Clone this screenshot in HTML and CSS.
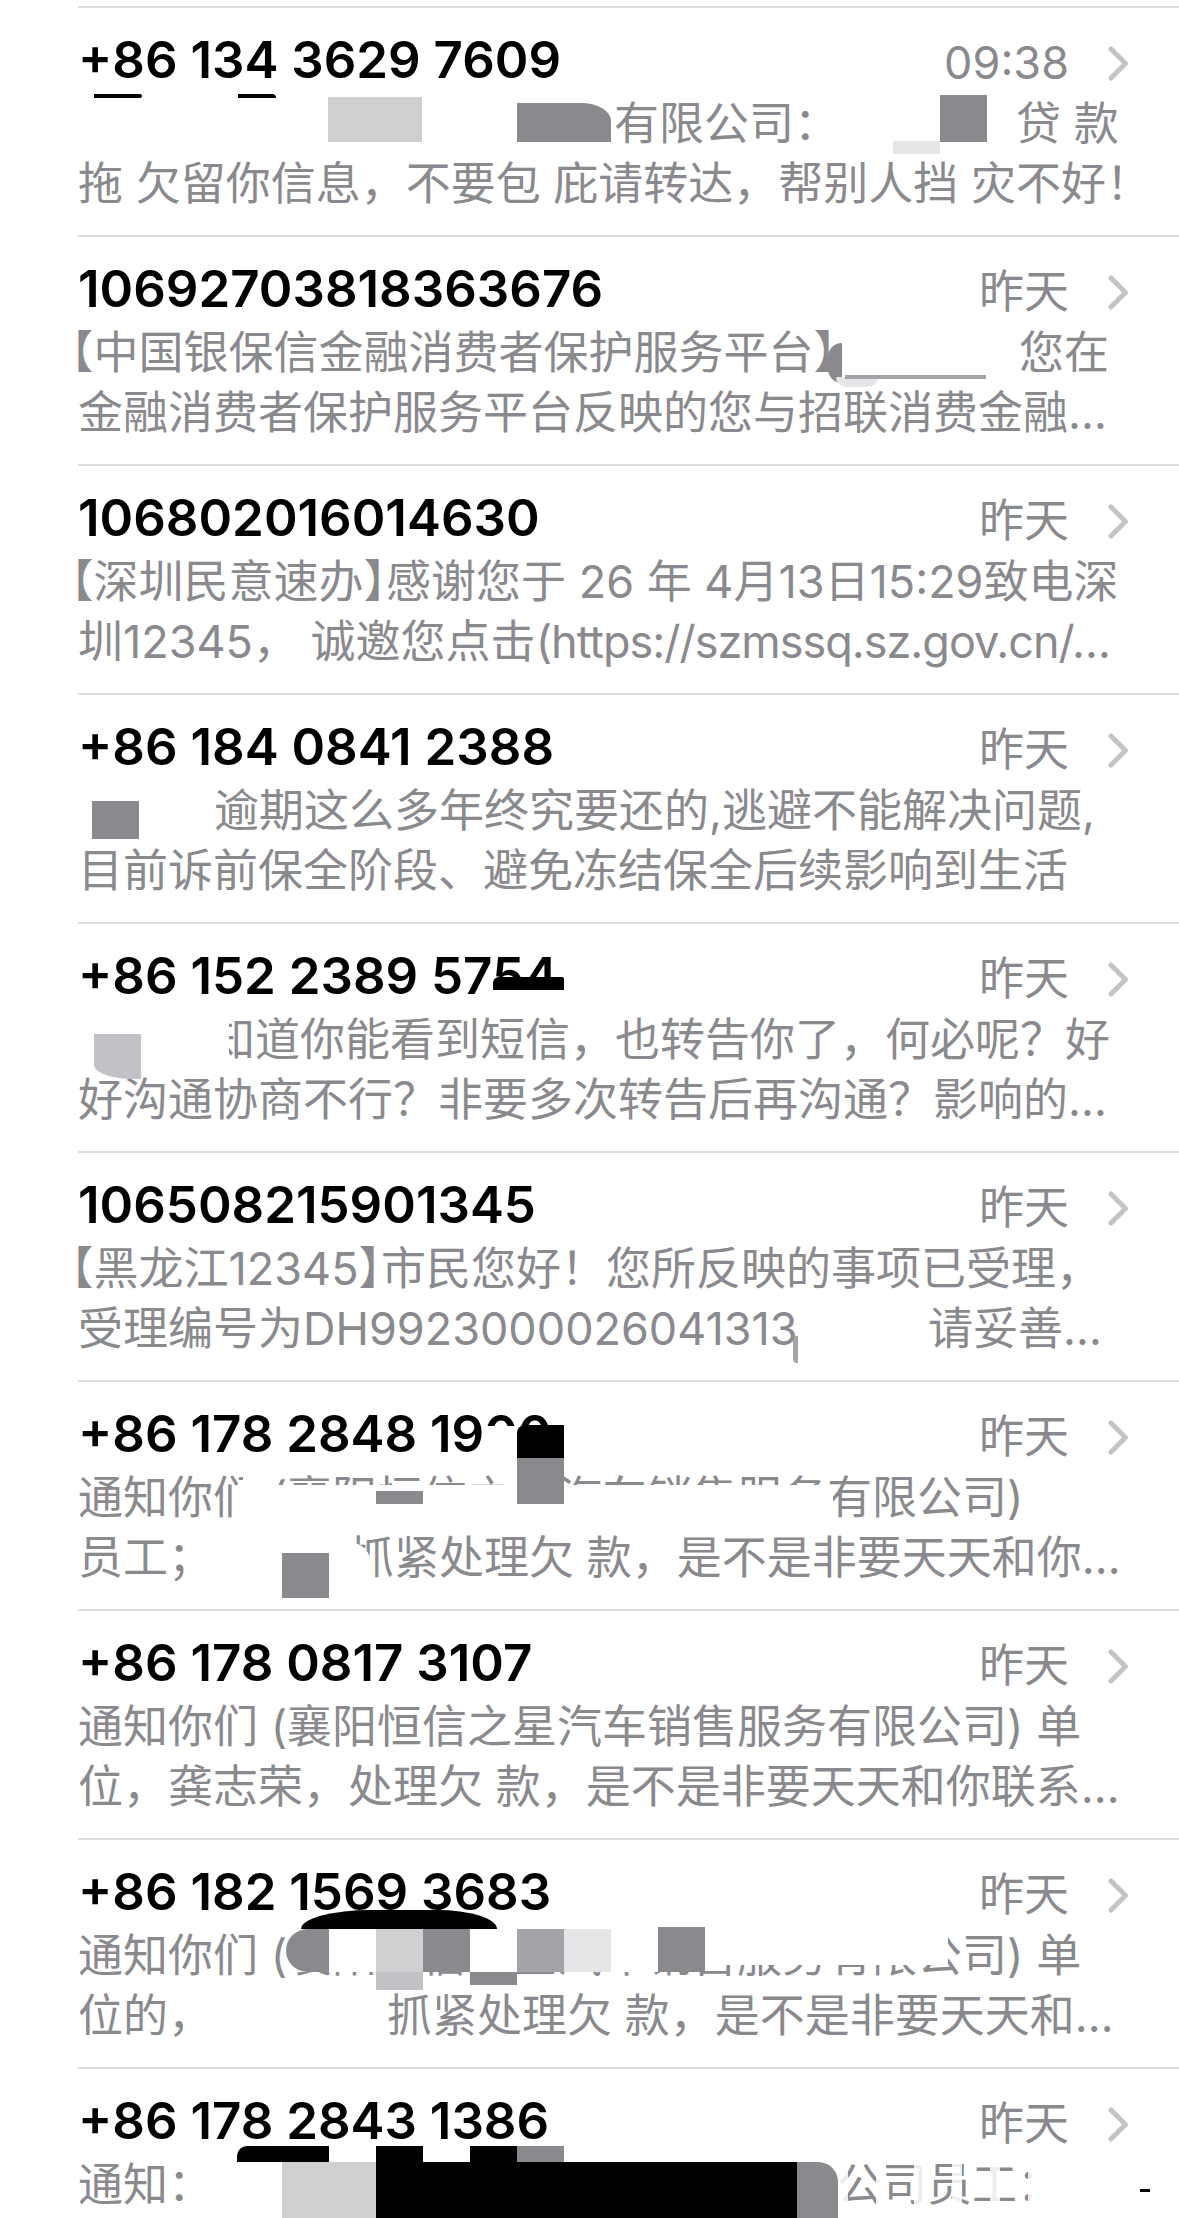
FILE: index.html
```html
<!DOCTYPE html>
<html lang="zh-CN">
<head>
  <meta charset="UTF-8" />
  <title>信息</title>
  <meta name="viewport" content="width=device-width, initial-scale=1.0" />
  <link rel="stylesheet" href="styles.css">
</head>
<body>

  <div class="list">

    <!-- 1 -->
    <div class="msg">
      <div class="head">
        <div class="num">+86 134 3629 7609</div>
        <div class="when">09:38</div>
        <svg class="chev" width="21" height="35" viewBox="0 0 21 35"><path d="M3 3 L17.5 17.5 L3 32" /></svg>
      </div>
      <div class="body">
        <div class="line"><span class="seg w536"></span><span class="seg w402">有限公司：</span>贷 款</div>
        <div class="line">拖 欠留你信息，不要包 庇请转达，帮别人挡 灾不好！</div>
      </div>
      <div class="rd bk r1a"></div>
      <div class="rd bk r1b"></div>
      <div class="rd lt r1c"></div>
      <div class="rd dk r1d"></div>
      <div class="rd pale r1e"></div>
      <div class="rd dk r1f"></div>
    </div>

    <!-- 2 -->
    <div class="msg">
      <div class="head">
        <div class="num">10692703818363676</div>
        <div class="when">昨天</div>
        <svg class="chev" width="21" height="35" viewBox="0 0 21 35"><path d="M3 3 L17.5 17.5 L3 32" /></svg>
      </div>
      <div class="body">
        <div class="line"><span class="seg w941"><span class="lb">【</span>中国银保信金融消费者保护服务平台<span class="rb">】</span></span>您在</div>
        <div class="line">金融消费者保护服务平台反映的您与招联消费金融…</div>
      </div>
      <div class="rd dk r2a"></div>
      <div class="rd pale r2c"></div>
      <div class="rd mid r2b"></div>
    </div>

    <!-- 3 -->
    <div class="msg">
      <div class="head">
        <div class="num">106802016014630</div>
        <div class="when">昨天</div>
        <svg class="chev" width="21" height="35" viewBox="0 0 21 35"><path d="M3 3 L17.5 17.5 L3 32" /></svg>
      </div>
      <div class="body">
        <div class="line"><span class="lb">【</span>深圳民意速办<span class="rb">】</span>感谢您于 26 年 4月13日15:29致电深</div>
        <div class="line">圳12345， 诚邀您点击<span class="url">(https://szmssq.sz.gov.cn/…</span></div>
      </div>
    </div>

    <!-- 4 -->
    <div class="msg">
      <div class="head">
        <div class="num">+86 184 0841 2388</div>
        <div class="when">昨天</div>
        <svg class="chev" width="21" height="35" viewBox="0 0 21 35"><path d="M3 3 L17.5 17.5 L3 32" /></svg>
      </div>
      <div class="body">
        <div class="line"><span class="seg w136"></span>逾期这么多年终究要还的,逃避不能解决问题,</div>
        <div class="line">目前诉前保全阶段、避免冻结保全后续影响到生活</div>
      </div>
      <div class="rd dk r4a"></div>
    </div>

    <!-- 5 -->
    <div class="msg">
      <div class="head">
        <div class="num">+86 152 2389 5754</div>
        <div class="when">昨天</div>
        <svg class="chev" width="21" height="35" viewBox="0 0 21 35"><path d="M3 3 L17.5 17.5 L3 32" /></svg>
      </div>
      <div class="body">
        <div class="line"><span class="seg w132"></span>知道你能看到短信，也转告你了，何必呢？好</div>
        <div class="line">好沟通协商不行？非要多次转告后再沟通？影响的…</div>
      </div>
      <div class="rd wh r5a"></div>
      <div class="rd bk r5b"></div>
      <div class="rd wh r5c"></div>
      <div class="rd soft r5d"></div>
    </div>

    <!-- 6 -->
    <div class="msg">
      <div class="head">
        <div class="num">106508215901345</div>
        <div class="when">昨天</div>
        <svg class="chev" width="21" height="35" viewBox="0 0 21 35"><path d="M3 3 L17.5 17.5 L3 32" /></svg>
      </div>
      <div class="body">
        <div class="line"><span class="lb">【</span>黑龙江12345<span class="rb">】</span>市民您好！您所反映的事项已受理，</div>
        <div class="line"><span class="seg w850">受理编号为DH9923000026041313</span>请妥善…</div>
      </div>
      <div class="rd wh r6a"></div>
      <div class="rd mid r6b"></div>
    </div>

    <!-- 7 -->
    <div class="msg">
      <div class="head">
        <div class="num">+86 178 2848 1900</div>
        <div class="when">昨天</div>
        <svg class="chev" width="21" height="35" viewBox="0 0 21 35"><path d="M3 3 L17.5 17.5 L3 32" /></svg>
      </div>
      <div class="body">
        <div class="line">通知你们 (襄阳恒信之星汽车销售服务有限公司)</div>
        <div class="line"><span class="seg w271">员工；</span>抓紧处理欠 款，是不是非要天天和你…</div>
      </div>
      <div class="rd wh r7a"></div>
      <div class="rd wh r7b"></div>
      <div class="rd wh r7c"></div>
      <div class="rd bk r7d"></div>
      <div class="rd dk r7e"></div>
      <div class="rd dk r7f"></div>
      <div class="rd dk r7g"></div>
      <div class="rd wh r7h"></div>
    </div>

    <!-- 8 -->
    <div class="msg">
      <div class="head">
        <div class="num">+86 178 0817 3107</div>
        <div class="when">昨天</div>
        <svg class="chev" width="21" height="35" viewBox="0 0 21 35"><path d="M3 3 L17.5 17.5 L3 32" /></svg>
      </div>
      <div class="body">
        <div class="line">通知你们 (襄阳恒信之星汽车销售服务有限公司) 单</div>
        <div class="line">位，龚志荣，处理欠 款，是不是非要天天和你联系…</div>
      </div>
    </div>

    <!-- 9 -->
    <div class="msg">
      <div class="head">
        <div class="num">+86 182 1569 3683</div>
        <div class="when">昨天</div>
        <svg class="chev" width="21" height="35" viewBox="0 0 21 35"><path d="M3 3 L17.5 17.5 L3 32" /></svg>
      </div>
      <div class="body">
        <div class="line">通知你们 (襄阳恒信之星汽车销售服务有限公司) 单</div>
        <div class="line"><span class="seg w309">位的，</span>抓紧处理欠 款，是不是非要天天和…</div>
      </div>
      <div class="rd bk r9a"></div>
      <div class="rd wh r9b"></div>
      <div class="rd dk r9c"></div>
      <div class="rd lt r9d"></div>
      <div class="rd soft r9e"></div>
      <div class="rd dk r9f"></div>
      <div class="rd dk r9g"></div>
      <div class="rd mid r9h"></div>
      <div class="rd pale r9i"></div>
      <div class="rd dk r9j"></div>
      <div class="rd wh r9k"></div>
    </div>

    <!-- 10 -->
    <div class="msg">
      <div class="head">
        <div class="num">+86 178 2843 1386</div>
        <div class="when">昨天</div>
        <svg class="chev" width="21" height="35" viewBox="0 0 21 35"><path d="M3 3 L17.5 17.5 L3 32" /></svg>
      </div>
      <div class="body">
        <div class="line"><span class="seg w759">通知：</span>公司员工：</div>
      </div>
      <div class="rd bk r10a"></div>
      <div class="rd bk r10b"></div>
      <div class="rd bk r10c"></div>
      <div class="rd dk r10d"></div>
      <div class="rd lt r10e"></div>
      <div class="rd bk r10f"></div>
      <div class="rd dk r10g"></div>
      <div class="rd streak r10h"></div>
      <div class="rd bk r10i"></div>
    </div>

  </div>

</body>
</html>
```

FILE: styles.css
```css
body {
  margin: 0;
  background: #fff;
  font-family: "Inter", "Noto Sans CJK SC", sans-serif;
  overflow: hidden;
}

.list {
  padding-top: 6px;
}

.msg {
  position: relative;
  height: 229px;
  box-sizing: border-box;
  margin-left: 78px;
  padding: 21px 50px 0 0;
  border-top: 2px solid #dcdcde;
}

.head {
  display: flex;
  align-items: center;
  height: 62px;
}

.num {
  flex: 1;
  font-size: 51px;
  font-weight: 600;
  line-height: 62px;
  color: #000;
  white-space: nowrap;
}

.when {
  font-size: 45px;
  line-height: 62px;
  padding-top: 6px;
  color: #8a8a8e;
}

.chev {
  margin-left: 39px;
  margin-top: 6px;
}

.chev path {
  fill: none;
  stroke: #c4c4c8;
  stroke-width: 5;
  stroke-linecap: round;
  stroke-linejoin: round;
}

.body {
  margin-top: 3px;
  font-size: 45px;
  color: #8a8a8e;
}

.line {
  height: 60px;
  line-height: 60px;
  white-space: nowrap;
}

.seg {
  display: inline-block;
  vertical-align: top;
  white-space: nowrap;
}

.lb, .rb {
  font-feature-settings: "halt";
}

.lb {
  margin-left: -7px;
}

.url {
  letter-spacing: -1px;
}

.w132 { width: 132px; }
.w136 { width: 136px; }
.w271 { width: 271px; }
.w309 { width: 309px; }
.w402 { width: 402px; }
.w536 { width: 536px; }
.w759 { width: 759px; }
.w850 { width: 850px; }
.w941 { width: 941px; }

/* redaction marks laid over the text */
.rd { position: absolute; }
.bk { background: #000; }
.dk { background: #8a8a8e; }
.mid { background: #a4a4a8; }
.soft { background: #c2c2c6; }
.lt { background: #d0d0d2; }
.pale { background: #e6e6e8; }
.wh { background: #fff; }

/* row 1 */
.r1a { left: 16px; top: 86px; width: 48px; height: 4px; border-radius: 0 3px 3px 0; }
.r1b { left: 160px; top: 86px; width: 38px; height: 4px; border-radius: 0 4px 0 0; }
.r1c { left: 250px; top: 89px; width: 94px; height: 45px; }
.r1d { left: 439px; top: 95px; width: 94px; height: 39px; border-top-right-radius: 30px 18px; }
.r1e { left: 815px; top: 133px; width: 47px; height: 13px; }
.r1f { left: 862px; top: 87px; width: 47px; height: 47px; }

/* row 2 */
.r2a { left: 750px; top: 106px; width: 14px; height: 40px; border-radius: 14px 0 0 14px; }
.r2b { left: 767px; top: 138px; width: 141px; height: 4px; }
.r2c { left: 758px; top: 140px; width: 42px; height: 10px; border-radius: 0 0 20px 20px; }

/* row 4 */
.r4a { left: 14px; top: 106px; width: 47px; height: 38px; }

/* row 5 */
.r5a { left: 412px; top: 66px; width: 80px; height: 18px; }
.r5b { left: 415px; top: 53px; width: 71px; height: 13px; border-radius: 6px 2px 0 0; }
.r5c { left: 127px; top: 88px; width: 24px; height: 58px; }
.r5d { left: 16px; top: 110px; width: 47px; height: 45px; border-bottom-left-radius: 40px 14px; }

/* row 6 */
.r6a { left: 721px; top: 150px; width: 128px; height: 58px; }
.r6b { left: 715px; top: 183px; width: 5px; height: 27px; border-radius: 4px 0 0 4px; }

/* row 7 */
.r7a { left: 407px; top: 44px; width: 32px; height: 36px; }
.r7b { left: 165px; top: 88px; width: 22px; height: 58px; }
.r7c { left: 187px; top: 103px; width: 568px; height: 44px; }
.r7d { left: 439px; top: 43px; width: 47px; height: 33px; border-top-left-radius: 8px; }
.r7e { left: 439px; top: 76px; width: 47px; height: 46px; }
.r7f { left: 298px; top: 109px; width: 47px; height: 13px; }
.r7g { left: 204px; top: 171px; width: 47px; height: 45px; }
.r7h { left: 251px; top: 160px; width: 42px; height: 56px; border-radius: 0 22px 22px 0; }

/* row 9 */
.r9a { left: 223px; top: 70px; width: 196px; height: 19px; border-radius: 70px 60px 0 0 / 19px 19px 0 0; }
.r9b { left: 208px; top: 89px; width: 419px; height: 43px; }
.r9c { left: 208px; top: 89px; width: 43px; height: 43px; border-radius: 22px 0 0 22px; }
.r9d { left: 298px; top: 89px; width: 47px; height: 61px; }
.r9e { left: 298px; top: 132px; width: 47px; height: 18px; }
.r9f { left: 345px; top: 89px; width: 47px; height: 43px; }
.r9g { left: 392px; top: 132px; width: 47px; height: 13px; }
.r9h { left: 439px; top: 89px; width: 47px; height: 43px; }
.r9i { left: 486px; top: 89px; width: 47px; height: 43px; }
.r9j { left: 580px; top: 87px; width: 47px; height: 45px; }
.r9k { left: 627px; top: 89px; width: 243px; height: 36px; }

/* row 10 */
.r10a { left: 159px; top: 77px; width: 92px; height: 16px; border-top-left-radius: 10px; }
.r10b { left: 298px; top: 77px; width: 47px; height: 16px; }
.r10c { left: 392px; top: 77px; width: 47px; height: 16px; }
.r10d { left: 439px; top: 77px; width: 47px; height: 16px; }
.r10e { left: 204px; top: 93px; width: 94px; height: 70px; }
.r10f { left: 298px; top: 93px; width: 421px; height: 70px; }
.r10g { left: 719px; top: 93px; width: 41px; height: 70px; border-radius: 0 20px 0 0; }
.r10h { left: 760px; top: 93px; width: 320px; height: 70px; background: repeating-linear-gradient(90deg, rgba(255,255,255,0.85) 0 10px, rgba(255,255,255,0) 10px 38px); }
.r10i { left: 1062px; top: 120px; width: 10px; height: 3px; }
```
